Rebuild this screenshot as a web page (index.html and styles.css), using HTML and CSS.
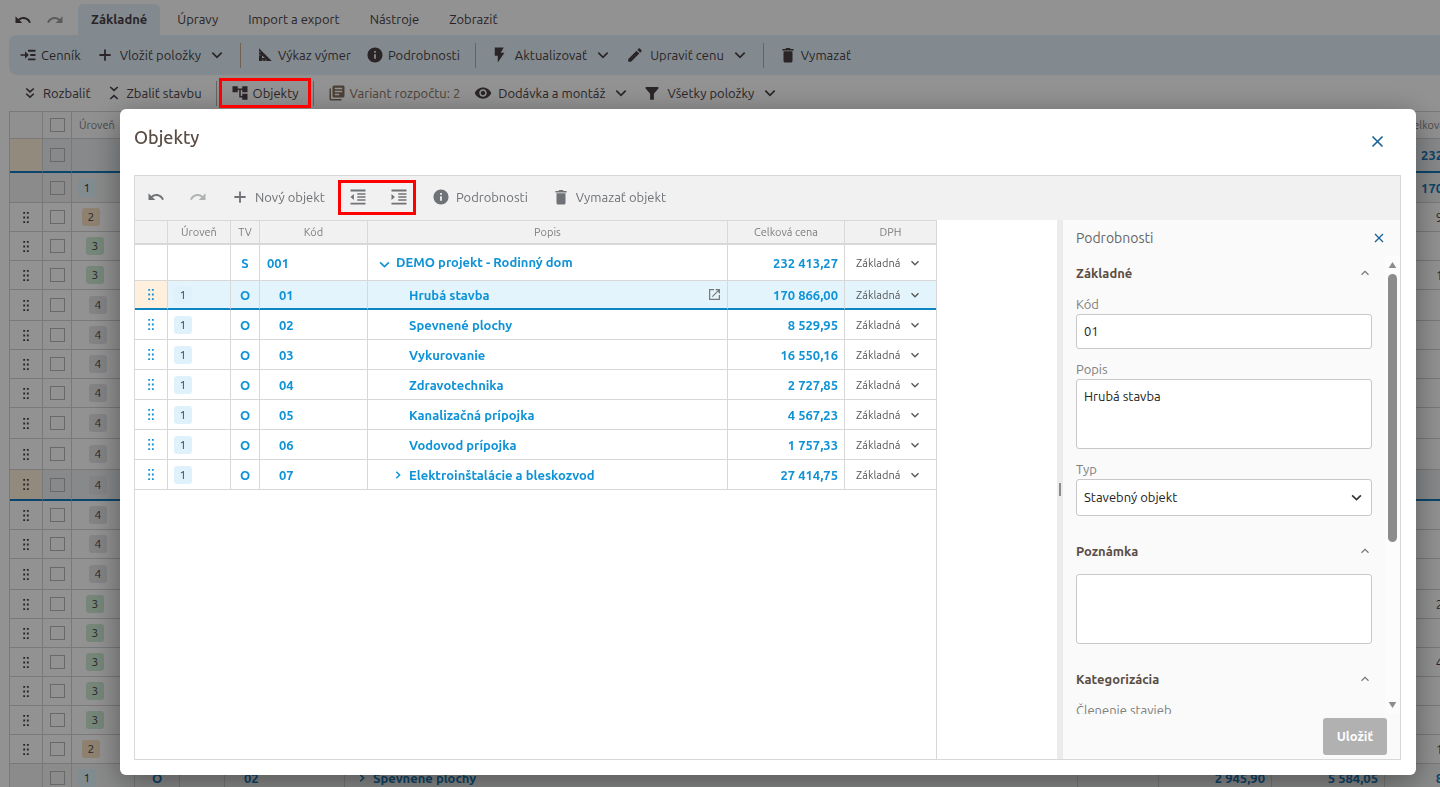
FILE: index.html
```html
<!DOCTYPE html>
<html lang="sk">
<head>
    <meta charset="UTF-8">
    <meta name="viewport" content="width=device-width, initial-scale=1.0">
    <title>Objekty</title>
    <link rel="stylesheet" href="styles.css">
</head>
<body>
    <!-- Icon set -->
    <svg class="icon-set" aria-hidden="true">
        <symbol id="undo" viewBox="0 0 24 24"><path d="M12.5 8c-2.65 0-5.05.99-6.9 2.6L2 7v9h9l-3.62-3.62c1.39-1.16 3.16-1.88 5.12-1.88 3.54 0 6.55 2.31 7.6 5.5l2.37-.78C21.08 11.03 17.15 8 12.5 8z"/></symbol>
        <symbol id="redo" viewBox="0 0 24 24"><path d="M18.4 10.6C16.55 8.99 14.15 8 11.5 8c-4.65 0-8.58 3.03-9.96 7.22L3.9 16c1.05-3.19 4.05-5.5 7.6-5.5 1.95 0 3.73.72 5.12 1.88L13 16h9V7l-3.6 3.6z"/></symbol>
        <symbol id="insert" viewBox="0 0 24 24"><path d="M2 11h6V7l5 5-5 5v-4H2zM12 5h10v2.500H12zM15 10.750h7v2.500h-7zM12 16.500h10V19H12z"/></symbol>
        <symbol id="plus" viewBox="0 0 24 24"><path d="M10.800 4.500h2.400v6.300h6.300v2.400h-6.300v6.300h-2.400v-6.300H4.500v-2.400h6.300z"/></symbol>
        <symbol id="down" viewBox="0 0 24 24"><path d="M5 8.500l7 7 7-7" fill="none" stroke="currentColor" stroke-width="2.600"/></symbol>
        <symbol id="up" viewBox="0 0 24 24"><path d="M5 15.500l7-7 7 7" fill="none" stroke="currentColor" stroke-width="2.400"/></symbol>
        <symbol id="right" viewBox="0 0 24 24"><path d="M8 4l8 8-8 8" fill="none" stroke="currentColor" stroke-width="3.500"/></symbol>
        <symbol id="ruler" viewBox="0 0 24 24"><path fill-rule="evenodd" d="M4 3l17 17H4zM8 12.500V16h4z"/><path d="M4 8h2M4 12h2M9 20v-2M13 20v-2" stroke="#e1eef7" stroke-width="1"/></symbol>
        <symbol id="info" viewBox="0 0 24 24"><path d="M12 2C6.480 2 2 6.480 2 12s4.480 10 10 10 10-4.480 10-10S17.520 2 12 2zm1.200 15h-2.400v-6h2.400v6zm0-8h-2.400V6.600h2.400V9z"/></symbol>
        <symbol id="bolt" viewBox="0 0 24 24"><path d="M5 2v11h4v9l9-13h-5l4-7z"/></symbol>
        <symbol id="pencil" viewBox="0 0 24 24"><path d="M3 17.250V21h3.750L17.810 9.940l-3.750-3.750L3 17.250zM20.710 7.040c.39-.39.39-1.020 0-1.410l-2.340-2.340c-.39-.39-1.020-.39-1.410 0l-1.830 1.830 3.750 3.750 1.830-1.830z"/></symbol>
        <symbol id="trash" viewBox="0 0 24 24"><path d="M6 20c0 1.100.9 2 2 2h8c1.100 0 2-.9 2-2V7H6v13zM19.500 4h-4l-1-1.500h-5l-1 1.500h-4v2h15z"/></symbol>
        <symbol id="expand" viewBox="0 0 24 24"><path d="M7 6l5 4.500L17 6M7 13l5 4.500 5-4.500" fill="none" stroke="currentColor" stroke-width="2.200"/></symbol>
        <symbol id="collapse" viewBox="0 0 24 24"><path d="M7 4l5 4.500L17 4M7 20l5-4.500 5 4.500" fill="none" stroke="currentColor" stroke-width="2.200"/></symbol>
        <symbol id="tree" viewBox="0 0 24 24"><path d="M22 11V3h-7v3H9V3H2v8h7V8h2v10h4v3h7v-8h-7v3h-2V8h2v3z"/></symbol>
        <symbol id="books" viewBox="0 0 24 24"><path d="M4 6H2v14c0 1.100.9 2 2 2h14v-2H4V6zm16-4H8c-1.100 0-2 .9-2 2v12c0 1.100.9 2 2 2h12c1.100 0 2-.9 2-2V4c0-1.100-.9-2-2-2zm-1 9H9V9h10v2zm-4 4H9v-2h6v2zm4-8H9V5h10v2z"/></symbol>
        <symbol id="eye" viewBox="0 0 24 24"><path d="M12 4.500C7 4.500 2.730 7.610 1 12c1.730 4.390 6 7.500 11 7.500s9.270-3.110 11-7.500c-1.730-4.390-6-7.500-11-7.500zM12 17c-2.760 0-5-2.240-5-5s2.240-5 5-5 5 2.240 5 5-2.240 5-5 5zm0-8c-1.660 0-3 1.340-3 3s1.340 3 3 3 3-1.340 3-3-1.340-3-3-3z"/></symbol>
        <symbol id="funnel" viewBox="0 0 24 24"><path d="M3.500 4h17v2l-6 7v8h-5v-8l-6-7z"/></symbol>
        <symbol id="outdent" viewBox="0 0 24 24"><path d="M11 17h11v-2H11v2zm-9-5l4.500 4V8L2 12zm0 10h20v-2.500H2V22zM2 2v2.500h20V2H2zm9 7h11V7H11v2zm0 4h11v-2H11v2z"/></symbol>
        <symbol id="indent" viewBox="0 0 24 24"><path d="M2 22h20v-2.500H2V22zM2 8v8l4.500-4L2 8zm9 9h11v-2H11v2zM2 2v2.500h20V2H2zm9 7h11V7H11v2zm0 4h11v-2H11v2z"/></symbol>
        <symbol id="close" viewBox="0 0 24 24"><path d="M4 4l16 16M20 4L4 20" fill="none" stroke="currentColor" stroke-width="2.600"/></symbol>
        <symbol id="open" viewBox="0 0 24 24"><path d="M11 3H3v18h18v-8M14 3h7v7M21 3L8 16" fill="none" stroke="currentColor" stroke-width="2.200"/></symbol>
        <symbol id="grip" viewBox="0 0 6 12"><path d="M0 0h2v2H0zM4 0h2v2H4zM0 5h2v2H0zM4 5h2v2H4zM0 10h2v2H0zM4 10h2v2H4z"/></symbol>
    </svg>

    <div class="app">
        <nav class="tabs">
            <button class="tool" aria-label="Späť"><svg><use href="#undo"/></svg></button>
            <button class="tool faded" aria-label="Znova"><svg><use href="#redo"/></svg></button>
            <button class="tab active">Základné</button>
            <button class="tab">Úpravy</button>
            <button class="tab">Import a export</button>
            <button class="tab">Nástroje</button>
            <button class="tab">Zobraziť</button>
        </nav>

        <div class="ribbon">
            <button class="tool"><svg><use href="#insert"/></svg>Cenník</button>
            <button class="tool drop"><svg><use href="#plus"/></svg>Vložiť položky<svg class="caret"><use href="#down"/></svg></button>
            <span class="line"></span>
            <button class="tool"><svg><use href="#ruler"/></svg>Výkaz výmer</button>
            <button class="tool"><svg><use href="#info"/></svg>Podrobnosti</button>
            <span class="line"></span>
            <button class="tool drop"><svg><use href="#bolt"/></svg>Aktualizovať<svg class="caret"><use href="#down"/></svg></button>
            <button class="tool drop"><svg><use href="#pencil"/></svg>Upraviť cenu<svg class="caret"><use href="#down"/></svg></button>
            <span class="line"></span>
            <button class="tool"><svg><use href="#trash"/></svg>Vymazať</button>
        </div>

        <div class="ribbon views">
            <button class="tool"><svg><use href="#expand"/></svg>Rozbaliť</button>
            <button class="tool"><svg><use href="#collapse"/></svg>Zbaliť stavbu</button>
            <span class="line"></span>
            <button class="tool marked"><svg><use href="#tree"/></svg>Objekty</button>
            <span class="line"></span>
            <button class="tool variant"><svg><use href="#books"/></svg>Variant rozpočtu: 2</button>
            <button class="tool drop"><svg><use href="#eye"/></svg>Dodávka a montáž<svg class="caret"><use href="#down"/></svg></button>
            <button class="tool drop"><svg><use href="#funnel"/></svg>Všetky položky<svg class="caret"><use href="#down"/></svg></button>
        </div>

        <table class="sheet">
            <colgroup>
                <col class="c-grip"><col class="c-check"><col class="c-level"><col class="c-type"><col class="c-type"><col class="c-code"><col><col class="c-unit"><col class="c-price"><col class="c-price"><col class="c-total">
            </colgroup>
            <thead>
                <tr><th></th><th><input type="checkbox" aria-label="Všetko"></th><th class="start">Úroveň</th><th></th><th></th><th></th><th></th><th></th><th></th><th></th><th>Celková cena</th></tr>
            </thead>
            <tbody>
                <tr class="root selected"><td></td><td><input type="checkbox" aria-label="Riadok"></td><td></td><td colspan="7"></td><td class="num">232 413,27</td></tr>
                <tr class="object first"><td></td><td><input type="checkbox" aria-label="Riadok"></td><td><span class="level l1">1</span></td><td colspan="7"></td><td class="num">170 866,00</td></tr>
                <tr><td><svg class="grip"><use href="#grip"/></svg></td><td><input type="checkbox" aria-label="Riadok"></td><td><span class="level l2">2</span></td><td colspan="7"></td><td class="num">9 529,95</td></tr>
                <tr><td><svg class="grip"><use href="#grip"/></svg></td><td><input type="checkbox" aria-label="Riadok"></td><td><span class="level l3">3</span></td><td colspan="7"></td><td></td></tr>
                <tr><td><svg class="grip"><use href="#grip"/></svg></td><td><input type="checkbox" aria-label="Riadok"></td><td><span class="level l3">3</span></td><td colspan="7"></td><td class="num">1 250,40</td></tr>
                <tr class="tall"><td><svg class="grip"><use href="#grip"/></svg></td><td><input type="checkbox" aria-label="Riadok"></td><td><span class="level l4">4</span></td><td colspan="7"></td><td></td></tr>
                <tr><td><svg class="grip"><use href="#grip"/></svg></td><td><input type="checkbox" aria-label="Riadok"></td><td><span class="level l4">4</span></td><td colspan="7"></td><td></td></tr>
                <tr><td><svg class="grip"><use href="#grip"/></svg></td><td><input type="checkbox" aria-label="Riadok"></td><td><span class="level l4">4</span></td><td colspan="7"></td><td></td></tr>
                <tr><td><svg class="grip"><use href="#grip"/></svg></td><td><input type="checkbox" aria-label="Riadok"></td><td><span class="level l4">4</span></td><td colspan="7"></td><td></td></tr>
                <tr class="tall"><td><svg class="grip"><use href="#grip"/></svg></td><td><input type="checkbox" aria-label="Riadok"></td><td><span class="level l4">4</span></td><td colspan="7"></td><td></td></tr>
                <tr class="tall"><td><svg class="grip"><use href="#grip"/></svg></td><td><input type="checkbox" aria-label="Riadok"></td><td><span class="level l4">4</span></td><td colspan="7"></td><td></td></tr>
                <tr class="tall selected"><td><svg class="grip"><use href="#grip"/></svg></td><td><input type="checkbox" aria-label="Riadok"></td><td><span class="level l4">4</span></td><td colspan="7"></td><td></td></tr>
                <tr><td><svg class="grip"><use href="#grip"/></svg></td><td><input type="checkbox" aria-label="Riadok"></td><td><span class="level l4">4</span></td><td colspan="7"></td><td></td></tr>
                <tr><td><svg class="grip"><use href="#grip"/></svg></td><td><input type="checkbox" aria-label="Riadok"></td><td><span class="level l4">4</span></td><td colspan="7"></td><td></td></tr>
                <tr class="tall"><td><svg class="grip"><use href="#grip"/></svg></td><td><input type="checkbox" aria-label="Riadok"></td><td><span class="level l4">4</span></td><td colspan="7"></td><td></td></tr>
                <tr><td><svg class="grip"><use href="#grip"/></svg></td><td><input type="checkbox" aria-label="Riadok"></td><td><span class="level l3">3</span></td><td colspan="7"></td><td class="num">2 727,85</td></tr>
                <tr><td><svg class="grip"><use href="#grip"/></svg></td><td><input type="checkbox" aria-label="Riadok"></td><td><span class="level l3">3</span></td><td colspan="7"></td><td></td></tr>
                <tr><td><svg class="grip"><use href="#grip"/></svg></td><td><input type="checkbox" aria-label="Riadok"></td><td><span class="level l3">3</span></td><td colspan="7"></td><td class="num">4 567,23</td></tr>
                <tr><td><svg class="grip"><use href="#grip"/></svg></td><td><input type="checkbox" aria-label="Riadok"></td><td><span class="level l3">3</span></td><td colspan="7"></td><td></td></tr>
                <tr><td><svg class="grip"><use href="#grip"/></svg></td><td><input type="checkbox" aria-label="Riadok"></td><td><span class="level l3">3</span></td><td colspan="7"></td><td></td></tr>
                <tr><td><svg class="grip"><use href="#grip"/></svg></td><td><input type="checkbox" aria-label="Riadok"></td><td><span class="level l2">2</span></td><td colspan="7"></td><td class="num">1 757,33</td></tr>
                <tr class="object"><td></td><td><input type="checkbox" aria-label="Riadok"></td><td><span class="level l1">1</span></td><td class="center">O</td><td></td><td class="code">02</td><td class="name"><svg><use href="#right"/></svg>Spevnené plochy</td><td></td><td class="num">2 945,90</td><td class="num">5 584,05</td><td class="num">8 529,95</td></tr>
            </tbody>
        </table>
    </div>

    <div class="backdrop"></div>

    <div class="dialog" role="dialog" aria-labelledby="dialogTitle">
        <div class="dialog-head">
            <h1 id="dialogTitle">Objekty</h1>
            <button class="close" aria-label="Zavrieť"><svg><use href="#close"/></svg></button>
        </div>

        <div class="dialog-body">
            <div class="toolbar">
                <button class="tool" aria-label="Späť"><svg><use href="#undo"/></svg></button>
                <button class="tool faded" aria-label="Znova"><svg><use href="#redo"/></svg></button>
                <button class="tool"><svg><use href="#plus"/></svg>Nový objekt</button>
                <div class="shift marked">
                    <button class="tool" aria-label="Zmenšiť odsadenie"><svg><use href="#outdent"/></svg></button>
                    <button class="tool" aria-label="Zväčšiť odsadenie"><svg><use href="#indent"/></svg></button>
                </div>
                <button class="tool"><svg><use href="#info"/></svg>Podrobnosti</button>
                <button class="tool"><svg><use href="#trash"/></svg>Vymazať objekt</button>
            </div>

            <div class="split">
                <div class="list">
                    <table class="objects">
                        <colgroup>
                            <col class="o-grip"><col class="o-level"><col class="o-type"><col class="o-code"><col class="o-name"><col class="o-price"><col class="o-vat">
                        </colgroup>
                        <thead>
                            <tr><th></th><th>Úroveň</th><th>TV</th><th>Kód</th><th>Popis</th><th>Celková cena</th><th>DPH</th></tr>
                        </thead>
                        <tbody>
                            <tr class="root"><td></td><td></td><td class="center">S</td><td class="code">001</td><td class="name"><svg><use href="#down"/></svg>DEMO projekt - Rodinný dom</td><td class="num">232 413,27</td><td><div class="vat"><select aria-label="DPH"><option>Základná</option></select><svg><use href="#down"/></svg></div></td></tr>
                            <tr class="selected"><td><svg class="grip"><use href="#grip"/></svg></td><td><span class="level l1">1</span></td><td class="center">O</td><td class="code">01</td><td class="name"><div class="name-row">Hrubá stavba<svg class="open"><use href="#open"/></svg></div></td><td class="num">170 866,00</td><td><div class="vat"><select aria-label="DPH"><option>Základná</option></select><svg><use href="#down"/></svg></div></td></tr>
                            <tr><td><svg class="grip"><use href="#grip"/></svg></td><td><span class="level l1">1</span></td><td class="center">O</td><td class="code">02</td><td class="name">Spevnené plochy</td><td class="num">8 529,95</td><td><div class="vat"><select aria-label="DPH"><option>Základná</option></select><svg><use href="#down"/></svg></div></td></tr>
                            <tr><td><svg class="grip"><use href="#grip"/></svg></td><td><span class="level l1">1</span></td><td class="center">O</td><td class="code">03</td><td class="name">Vykurovanie</td><td class="num">16 550,16</td><td><div class="vat"><select aria-label="DPH"><option>Základná</option></select><svg><use href="#down"/></svg></div></td></tr>
                            <tr><td><svg class="grip"><use href="#grip"/></svg></td><td><span class="level l1">1</span></td><td class="center">O</td><td class="code">04</td><td class="name">Zdravotechnika</td><td class="num">2 727,85</td><td><div class="vat"><select aria-label="DPH"><option>Základná</option></select><svg><use href="#down"/></svg></div></td></tr>
                            <tr><td><svg class="grip"><use href="#grip"/></svg></td><td><span class="level l1">1</span></td><td class="center">O</td><td class="code">05</td><td class="name">Kanalizačná prípojka</td><td class="num">4 567,23</td><td><div class="vat"><select aria-label="DPH"><option>Základná</option></select><svg><use href="#down"/></svg></div></td></tr>
                            <tr><td><svg class="grip"><use href="#grip"/></svg></td><td><span class="level l1">1</span></td><td class="center">O</td><td class="code">06</td><td class="name">Vodovod prípojka</td><td class="num">1 757,33</td><td><div class="vat"><select aria-label="DPH"><option>Základná</option></select><svg><use href="#down"/></svg></div></td></tr>
                            <tr><td><svg class="grip"><use href="#grip"/></svg></td><td><span class="level l1">1</span></td><td class="center">O</td><td class="code">07</td><td class="name branch"><svg><use href="#right"/></svg>Elektroinštalácie a bleskozvod</td><td class="num">27 414,75</td><td><div class="vat"><select aria-label="DPH"><option>Základná</option></select><svg><use href="#down"/></svg></div></td></tr>
                        </tbody>
                    </table>
                </div>
                <div class="gutter"></div>
                <div class="splitter"><span></span></div>

                <aside class="details">
                    <div class="details-head">
                        <h2>Podrobnosti</h2>
                        <button class="close small" aria-label="Zavrieť podrobnosti"><svg><use href="#close"/></svg></button>
                    </div>
                    <div class="details-body">
                        <form class="fields" id="objectForm">
                            <h3>Základné<svg><use href="#up"/></svg></h3>
                            <label for="code">Kód</label>
                            <input type="text" id="code" name="code" value="01">
                            <label for="name">Popis</label>
                            <textarea id="name" name="name">Hrubá stavba</textarea>
                            <label for="type">Typ</label>
                            <div class="select">
                                <select id="type" name="type"><option>Stavebný objekt</option></select>
                                <svg><use href="#down"/></svg>
                            </div>
                            <h3 id="noteTitle">Poznámka<svg><use href="#up"/></svg></h3>
                            <textarea name="note" aria-labelledby="noteTitle"></textarea>
                            <h3>Kategorizácia<svg><use href="#up"/></svg></h3>
                            <label for="category">Členenie stavieb</label>
                            <input type="text" id="category" name="category">
                        </form>
                        <div class="scrollbar">
                            <svg viewBox="0 0 9 7"><path d="M4.500 0L9 7H0z"/></svg>
                            <span class="thumb"></span>
                            <svg class="last" viewBox="0 0 9 7"><path d="M4.500 7L9 0H0z"/></svg>
                        </div>
                    </div>
                    <div class="details-foot">
                        <button class="save" type="submit" form="objectForm">Uložiť</button>
                    </div>
                </aside>
            </div>
        </div>
    </div>
</body>
</html>
```
FILE: styles.css
```css
* {
    box-sizing: border-box;
}

body {
    margin: 0;
    height: 100vh;
    overflow: hidden;
    font-family: Ubuntu, 'Open Sans', 'Noto Sans', sans-serif;
    font-size: 13px;
    line-height: 18px;
    color: #333;
}

button, input, select, textarea {
    font: inherit;
    color: inherit;
}

button {
    padding: 0;
    border: none;
    background: none;
    white-space: nowrap;
    cursor: pointer;
}

svg {
    fill: currentColor;
    flex: none;
}

.icon-set {
    display: none;
}

/* Application behind the dialog */
.app {
    height: 100vh;
    overflow: hidden;
    padding-left: 9px;
    background-color: #fbfbfb;
    color: #4a3f44;
}

.tool {
    display: flex;
    align-items: center;
    gap: 4px;
}

.tool.drop {
    gap: 6px;
}

.tool svg {
    width: 18px;
    height: 18px;
}

.tool .caret {
    width: 16px;
    height: 16px;
    margin-left: 2px;
}

.faded {
    opacity: 0.5;
}

.tabs {
    display: flex;
    gap: 4px;
    height: 35px;
    padding: 4px 0 0 5px;
}

.tabs .tool {
    margin-right: 10px;
}

.tab {
    padding: 0 13px 1px;
}

.tab.active {
    border-radius: 5px 5px 0 0;
    background-color: #e1eef7;
    font-weight: bold;
}

.ribbon {
    display: flex;
    align-items: center;
    gap: 15px;
    height: 40px;
    padding-left: 10px;
    border-radius: 8px 0 0 8px;
    background-color: #e1eef7;
}

.ribbon.views {
    gap: 14px;
    height: 36px;
    padding-left: 12px;
    background: none;
}

.line {
    width: 1px;
    height: 25px;
    background-color: #c0a890;
}

.views .line {
    background-color: #b0aaa5;
}

.variant {
    color: #83705f;
}

.marked {
    position: relative;
}

.marked::after {
    content: "";
    position: absolute;
    z-index: 3;
    inset: -6px -12px;
    border: 3px solid #f00;
}

/* Tables */
table {
    border-collapse: separate;
    border-spacing: 0;
    table-layout: fixed;
}

th, td {
    padding: 0;
    border-right: 1px solid #d8d8d8;
    border-bottom: 1px solid #d8d8d8;
    white-space: nowrap;
}

th {
    background-color: #f1f1f1;
    color: #7d7d7d;
    font-size: 11px;
    font-weight: normal;
}

.center {
    text-align: center;
}

.num {
    padding-right: 6px;
    text-align: right;
}

.grip {
    display: block;
    width: 6px;
    height: 11px;
    margin: 0 auto;
}

.level {
    display: block;
    width: 18px;
    height: 18px;
    margin-left: 6px;
    border-radius: 3px;
    font-size: 12px;
    text-align: center;
}

.l1 { background-color: #dff1fa; }
.l2 { background-color: #f6dfc0; }
.l3 { background-color: #cbe8d3; }
.l4 { background-color: #e3e3e8; }

.sheet {
    width: calc(100% + 53px);
    border-top: 1px solid #d0d0d0;
    border-left: 1px solid #d0d0d0;
}

.sheet th, .sheet td {
    border-color: #d0d0d0;
}

.sheet th {
    background-color: #f9f9f9;
}

.sheet .start {
    padding-left: 7px;
    text-align: left;
}

.sheet tr { height: 29px; }
.sheet thead tr { height: 27px; }
.sheet tr.tall { height: 31px; }
.sheet tr.root { height: 34px; }
.sheet tr.first { height: 30px; }

.sheet .object td {
    background-color: #eff0f0;
}

.sheet .object, .sheet .root {
    color: #1577b8;
    font-weight: bold;
}

.sheet .selected td {
    border-bottom: 2px solid #1577b8;
    background-color: #eaecee;
}

.sheet .selected td:first-child {
    background-color: #fbeed8;
}

.sheet .l1 { color: #333; font-weight: normal; }
.sheet .l2 { margin-left: 10px; }
.sheet .l3 { margin-left: 14px; }
.sheet .l4 { margin-left: 17px; }

.sheet input {
    display: block;
    appearance: none;
    width: 15px;
    height: 14px;
    margin: 0 auto;
    border: 1px solid #b5b5b5;
}

.sheet .code {
    padding-left: 19px;
}

.sheet .name {
    padding-left: 12px;
}

.name svg {
    width: 10px;
    height: 10px;
    margin-right: 6px;
}

.c-grip { width: 33px; }
.c-check { width: 29px; }
.c-level { width: 63px; }
.c-type { width: 45px; }
.c-code { width: 120px; }
.c-unit { width: 81px; }
.c-price { width: 113px; }
.c-total { width: 108px; }

/* Dialog */
.backdrop {
    position: fixed;
    z-index: 1;
    inset: 0;
    background-color: rgba(0, 0, 0, 0.42);
}

.dialog {
    position: fixed;
    z-index: 2;
    inset: 109px 24px 12px 120px;
    display: flex;
    flex-direction: column;
    padding: 0 15px 15px 14px;
    border-radius: 6px;
    background-color: #fff;
    box-shadow: 0 8px 32px rgba(0, 0, 0, 0.4);
}

.dialog-head {
    display: flex;
    justify-content: space-between;
    height: 66px;
    padding: 16px 16px 0 0;
}

h1, h2, h3 {
    margin: 0;
}

h1 {
    color: #5a4d45;
    font-size: 18px;
    font-weight: 500;
    line-height: 24px;
}

.close {
    height: 32px;
    color: #1a6296;
}

.close svg {
    display: block;
    width: 15px;
    height: 15px;
}

.close.small svg {
    width: 12px;
    height: 12px;
}

.dialog-body {
    flex: 1;
    display: flex;
    flex-direction: column;
    min-height: 0;
    border: 1px solid #d8d8d8;
}

.toolbar {
    display: flex;
    align-items: center;
    gap: 24px;
    height: 44px;
    padding: 0 12px 2px;
    background-color: #f1f1f1;
    color: #6f7276;
}

.toolbar .tool {
    gap: 6px;
}

.shift {
    display: flex;
    gap: 23px;
}

.shift::after {
    inset: -8px -8px -9px -11px;
}

.split {
    flex: 1;
    display: flex;
    min-height: 0;
}

.list {
    border-right: 1px solid #d8d8d8;
}

.gutter {
    flex: 1;
}

.objects {
    width: 801px;
    border-top: 1px solid #d8d8d8;
}

.objects th:last-child, .objects td:last-child {
    border-right: none;
}

.objects tr { height: 30px; }
.objects tr.root { height: 36px; }
.objects tr.selected { height: 29px; }
.objects thead tr { height: 24px; }

.objects th {
    border-bottom-width: 2px;
}

.objects td {
    color: #0f93d6;
    font-weight: bold;
}

.objects .selected td {
    border-bottom: 2px solid #0f86c4;
    background-color: #e3f4fc;
}

.objects .selected td:first-child {
    background-color: #fef0dc;
}

.objects .level {
    color: #444;
    font-weight: normal;
}

.objects .code {
    padding-left: 19px;
}

.objects .name {
    padding-left: 41px;
}

.objects .root .code {
    padding-left: 7px;
}

.objects .root .name {
    padding-left: 9px;
}

.objects .root .name svg {
    width: 15px;
    height: 15px;
    margin-right: 4px;
    vertical-align: middle;
}

.objects .branch {
    padding-left: 25px;
}

.name-row {
    display: flex;
    justify-content: space-between;
    align-items: center;
}

.name-row .open {
    width: 13px;
    height: 13px;
    color: #777;
}

.vat {
    display: flex;
    align-items: center;
    padding-left: 11px;
    color: #555;
    font-size: 11px;
    font-weight: normal;
}

.vat select {
    appearance: none;
    width: 53px;
    padding: 0;
    border: none;
    background: none;
}

.vat svg {
    width: 12px;
    height: 12px;
}

.o-grip { width: 33px; }
.o-level { width: 63px; }
.o-type { width: 29px; }
.o-code { width: 108px; }
.o-name { width: 360px; }
.o-price { width: 117px; }
.o-vat { width: 91px; }

/* Details panel */
.splitter {
    display: flex;
    align-items: center;
    justify-content: center;
    width: 6px;
    background-color: #ebebeb;
}

.splitter span {
    width: 2px;
    height: 13px;
    background-color: #8c8c8c;
}

.details {
    display: flex;
    flex-direction: column;
    width: 337px;
    background-color: #fafafa;
}

.details-head {
    display: flex;
    align-items: center;
    justify-content: space-between;
    height: 36px;
    padding: 0 15px 0 13px;
}

.details-head .close {
    height: auto;
}

h2 {
    color: #666;
    font-size: 14px;
    font-weight: normal;
}

.details-body {
    flex: 1;
    display: flex;
    min-height: 0;
    overflow: hidden;
}

.fields {
    flex: 1;
    display: flex;
    flex-direction: column;
    padding: 0 13px;
}

h3 {
    display: flex;
    flex: none;
    align-items: center;
    justify-content: space-between;
    height: 34px;
    margin: 18px 0 6px;
    color: #5a4d45;
    font-size: 13px;
}

h3:first-child {
    margin-top: 0;
}

h3 svg {
    width: 12px;
    height: 12px;
    margin-right: 1px;
    color: #777;
}

.fields label {
    flex: none;
    height: 18px;
    color: #808080;
    line-height: 16px;
}

.fields input, .fields textarea, .fields select {
    flex: none;
    display: block;
    width: 100%;
    height: 35px;
    padding: 0 7px 2px;
    border: 1px solid #c8c8c8;
    border-radius: 3px;
    background-color: #fff;
    color: #222;
}

.fields textarea {
    height: 70px;
    padding-top: 7px;
    resize: none;
}

.fields input + label, .fields textarea + label {
    margin-top: 12px;
}

.select {
    position: relative;
}

.fields select {
    appearance: none;
    height: 37px;
}

.select svg {
    position: absolute;
    top: 11px;
    right: 8px;
    width: 15px;
    height: 15px;
    color: #333;
}

.scrollbar {
    display: flex;
    flex-direction: column;
    align-items: center;
    width: 15px;
    padding: 6px 0;
    background-color: #fcfcfc;
    color: #8b8d8d;
}

.scrollbar svg {
    width: 9px;
    height: 6px;
}

.scrollbar .last {
    margin-top: auto;
}

.thumb {
    width: 9px;
    height: 60%;
    margin-top: 6px;
    border-radius: 5px;
    background-color: #8b8d8d;
}

.details-foot {
    display: flex;
    justify-content: flex-end;
    align-items: flex-start;
    height: 45px;
    padding: 4px 13px 0 0;
}

.save {
    height: 37px;
    padding: 0 14px 2px;
    border-radius: 3px;
    background-color: #b1b1b1;
    color: #fff;
    font-weight: bold;
}
```
